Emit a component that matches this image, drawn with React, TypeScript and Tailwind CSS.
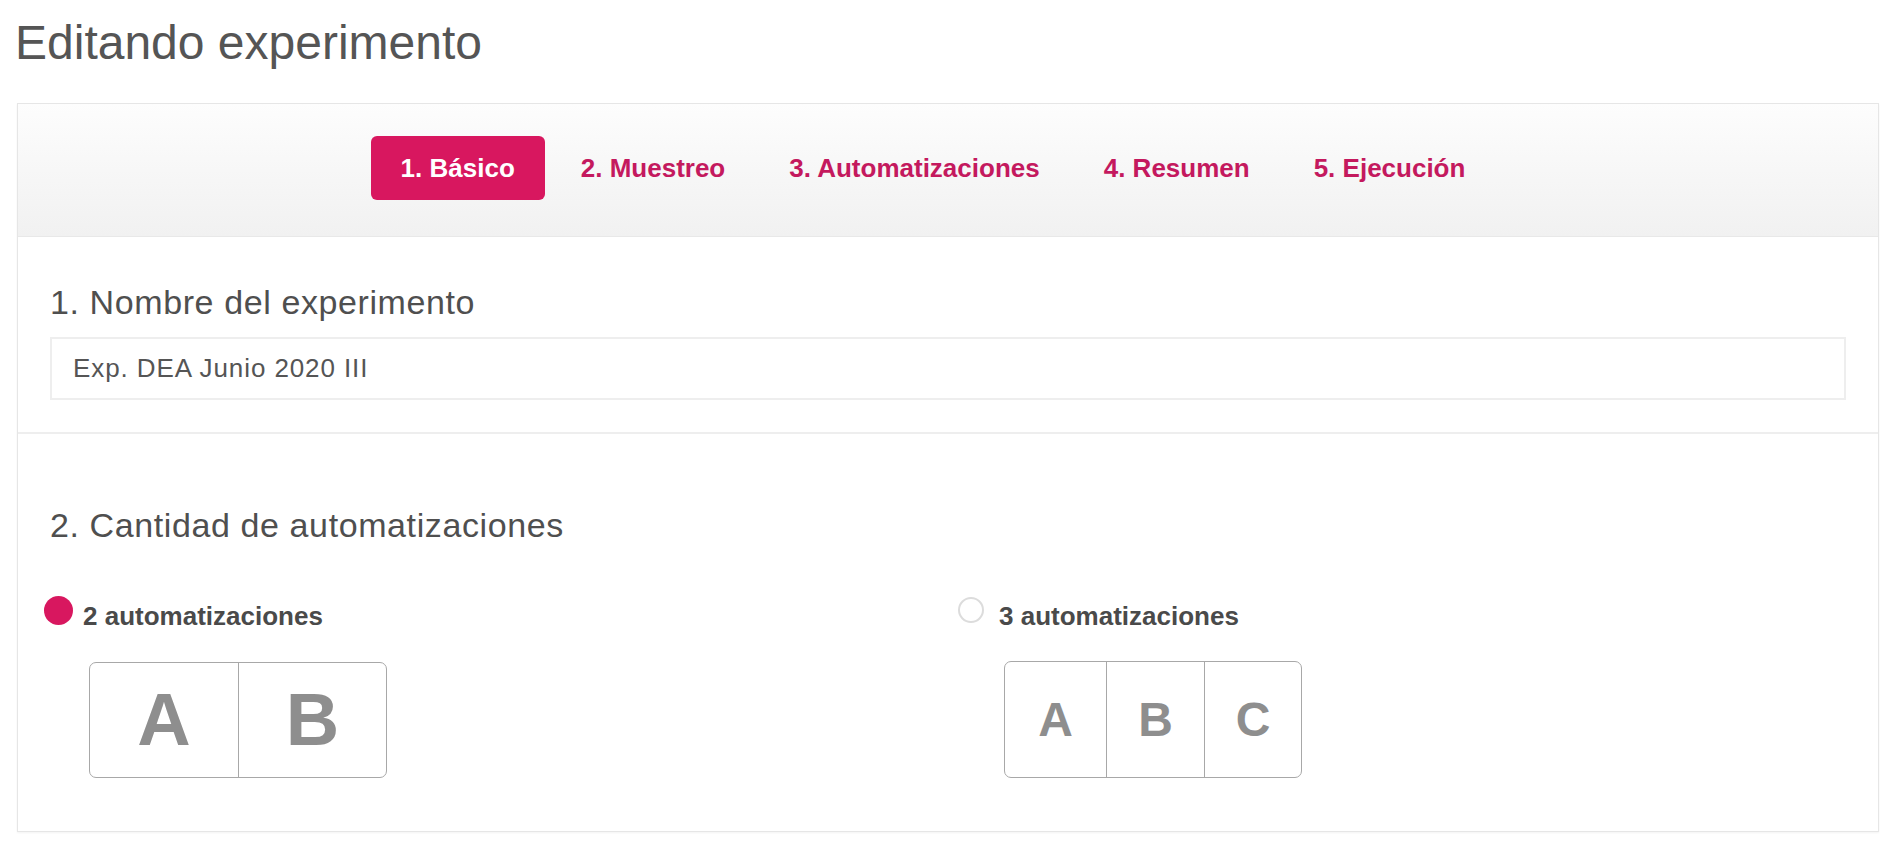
import React from 'react';

const steps = ['1. Básico', '2. Muestreo', '3. Automatizaciones', '4. Resumen', '5. Ejecución'];

const App: React.FC = () => {
  return (
    <div className="min-h-screen bg-white font-['Liberation_Sans',Arial,sans-serif]">
      <h1 className="pl-[15px] pt-[19px] text-[48px] leading-none font-normal text-[#555555]">
        Editando experimento
      </h1>

      <div className="mt-[36px] ml-[17px] mr-[25px] border border-[#e6e6e6] bg-white shadow-[0_1px_2px_rgba(0,0,0,0.05)]">
        {/* pasos */}
        <div className="flex justify-center gap-[8px] pr-[32px] pt-[32px] pb-[36px] border-b border-[#e8e8e8] bg-linear-to-b from-[#fdfdfd] to-[#f1f1f1]">
          {steps.map((s, i) => (
            <div
              key={s}
              className={
                i === 0
                  ? 'flex h-[64px] items-center px-[30px] rounded-[6px] bg-[#d8175f] text-white text-[26px] font-bold leading-none'
                  : 'flex h-[64px] items-center px-[28px] text-[#c4195e] text-[26px] font-bold leading-none'
              }
            >
              {s}
            </div>
          ))}
        </div>

        {/* nombre */}
        <div className="px-8 pt-[48px] pb-[32px] border-b-2 border-[#eeeeee]">
          <div className="text-[34px] leading-none tracking-[0.6px] text-[#4f4f4f]">1. Nombre del experimento</div>
          <input
            defaultValue="Exp. DEA Junio 2020 III"
            className="mt-[18px] block w-full h-[63px] border-2 border-[#eeeeee] px-[21px] text-[26px] tracking-[0.9px] text-[#555555] outline-none"
          />
        </div>

        {/* cantidad */}
        <div className="px-8 pt-[74px] pb-[53px]">
          <div className="text-[34px] leading-none tracking-[0.6px] text-[#4f4f4f]">2. Cantidad de automatizaciones</div>
          <div className="mt-[54px] flex">
            <div className="ml-[-6px] w-[914px]">
              <div className="flex items-start gap-[10px]">
                <div className="w-[29px] h-[29px] rounded-full bg-[#d8175f]" />
                <span className="mt-[7px] text-[26px] leading-none font-bold text-[#4a4a4a]">2 automatizaciones</span>
              </div>
              <div className="mt-[33px] ml-[45px] flex w-[298px] h-[116px] border-[1.5px] border-[#a8a8a8] rounded-[7px]">
                <div className="w-[148px] flex items-center justify-center text-[74px] font-bold leading-none text-[#8e8e8e]">A</div>
                <div className="flex-1 flex items-center justify-center border-l-[1.5px] border-[#a8a8a8] text-[74px] font-bold leading-none text-[#8e8e8e]">B</div>
              </div>
            </div>
            <div>
              <div className="flex items-start gap-[15px]">
                <div className="mt-[1px] w-[26px] h-[26px] rounded-full border-2 border-[#dcdcdc]" />
                <span className="mt-[7px] text-[26px] leading-none font-bold text-[#4a4a4a]">3 automatizaciones</span>
              </div>
              <div className="mt-[32px] ml-[46px] flex w-[298px] h-[117px] border-[1.5px] border-[#a8a8a8] rounded-[7px]">
                <div className="w-[101px] flex items-center justify-center text-[48px] font-bold leading-none text-[#8e8e8e]">A</div>
                <div className="w-[98px] flex items-center justify-center border-l-[1.5px] border-[#a8a8a8] text-[48px] font-bold leading-none text-[#8e8e8e]">B</div>
                <div className="flex-1 flex items-center justify-center border-l-[1.5px] border-[#a8a8a8] text-[48px] font-bold leading-none text-[#8e8e8e]">C</div>
              </div>
            </div>
          </div>
        </div>
      </div>
    </div>
  );
};

export default App;
